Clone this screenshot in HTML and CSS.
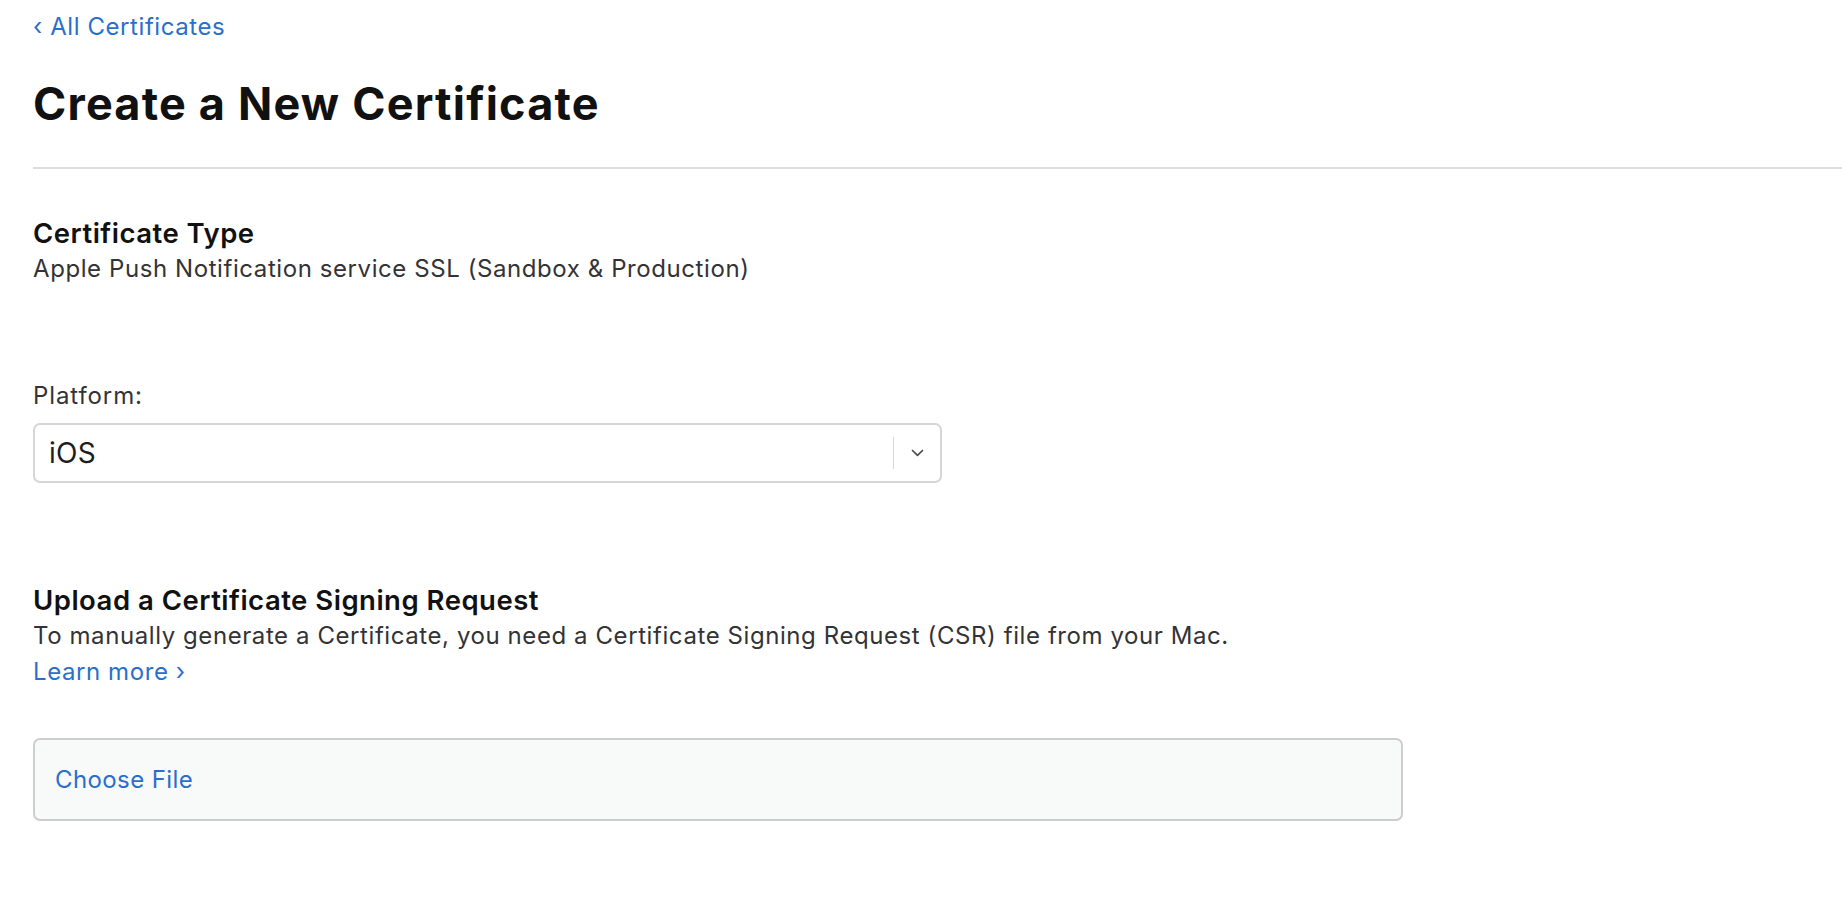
FILE: index.html
```html
<!DOCTYPE html>
<html lang="en">
<head>
<meta charset="utf-8">
<title>Create a New Certificate</title>
<link rel="stylesheet" href="styles.css">
</head>
<body>
<main class="page">
  <a class="back-link" href="#"><span class="chev">‹</span> All Certificates</a>
  <h1 class="title">Create a New Certificate</h1>
  <hr class="divider">

  <section class="cert-type">
    <h2 class="section-title">Certificate Type</h2>
    <p class="section-text">Apple Push Notification service SSL (Sandbox &amp; Production)</p>
  </section>

  <section class="platform">
    <label class="field-label">Platform:</label>
    <div class="select">
      <span class="select-value">iOS</span>
      <span class="select-sep"></span>
      <span class="select-arrow">
        <svg width="13" height="8" viewBox="0 0 13 8"><path d="M1.5 1.5 L6.5 6.3 L11.5 1.5" fill="none" stroke="#4a4a4a" stroke-width="1.7" stroke-linecap="round" stroke-linejoin="round"/></svg>
      </span>
    </div>
  </section>

  <section class="upload">
    <h2 class="section-title">Upload a Certificate Signing Request</h2>
    <p class="section-text">To manually generate a Certificate, you need a Certificate Signing Request (CSR) file from your Mac.</p>
    <a class="learn-more" href="#">Learn more ›</a>
  </section>

  <div class="file-box">
    <span class="choose-file">Choose File</span>
  </div>
</main>
</body>
</html>
```

FILE: styles.css
```css
html, body {
  margin: 0;
  padding: 0;
  background: #ffffff;
}

body {
  font-family: "Inter", "Noto Sans", "Liberation Sans", sans-serif;
  color: #333336;
  font-size: 24px;
  line-height: 36px;
  letter-spacing: 0.58px;
}

.page {
  padding: 9px 0 0 33px;
  display: flex;
  flex-direction: column;
  align-items: flex-start;
}

a {
  text-decoration: none;
  color: #2a6fcb;
}

.back-link {
  font-size: 24px;
  line-height: 36px;
}

.title {
  margin: 32px 0 0 0;
  font-size: 45px;
  line-height: 54px;
  font-weight: 700;
  color: #111111;
  letter-spacing: 1.2px;
}

.divider {
  align-self: stretch;
  margin: 36px 0 0 0;
  border: 0;
  height: 2px;
  background: #dedede;
}

.cert-type {
  margin-top: 46px;
}

.section-title {
  margin: 0;
  font-size: 27.5px;
  line-height: 36px;
  font-weight: 600;
  color: #111111;
  letter-spacing: 0.5px;
}

.section-text {
  margin: 0;
  font-size: 24px;
  line-height: 36px;
  color: #333336;
}

.platform {
  margin-top: 91px;
  display: flex;
  flex-direction: column;
}

.field-label {
  font-size: 24px;
  line-height: 36px;
  color: #333336;
  letter-spacing: 0.9px;
}

.select {
  margin-top: 9px;
  width: 909px;
  height: 60px;
  box-sizing: border-box;
  border: 2px solid #d6d6d6;
  border-radius: 7px;
  display: flex;
  align-items: center;
  background: #ffffff;
}

.select-value {
  flex: 1;
  padding-left: 14px;
  font-size: 28px;
  color: #1d1d1f;
  letter-spacing: 0.3px;
}

.select-sep {
  width: 1px;
  height: 32px;
  background: #d6d6d6;
}

.select-arrow {
  width: 46px;
  display: flex;
  justify-content: center;
  align-items: center;
}

.upload {
  margin-top: 99px;
}

.learn-more {
  display: inline-block;
  font-size: 24px;
  line-height: 36px;
}

.file-box {
  margin-top: 48px;
  width: 1370px;
  height: 83px;
  box-sizing: border-box;
  border: 2px solid #cdcdcd;
  border-radius: 7px;
  background: #f8f9f9;
  display: flex;
  align-items: center;
  padding-left: 20px;
}

.choose-file {
  font-size: 24px;
  color: #2a6fcb;
  letter-spacing: 0.4px;
}
```
